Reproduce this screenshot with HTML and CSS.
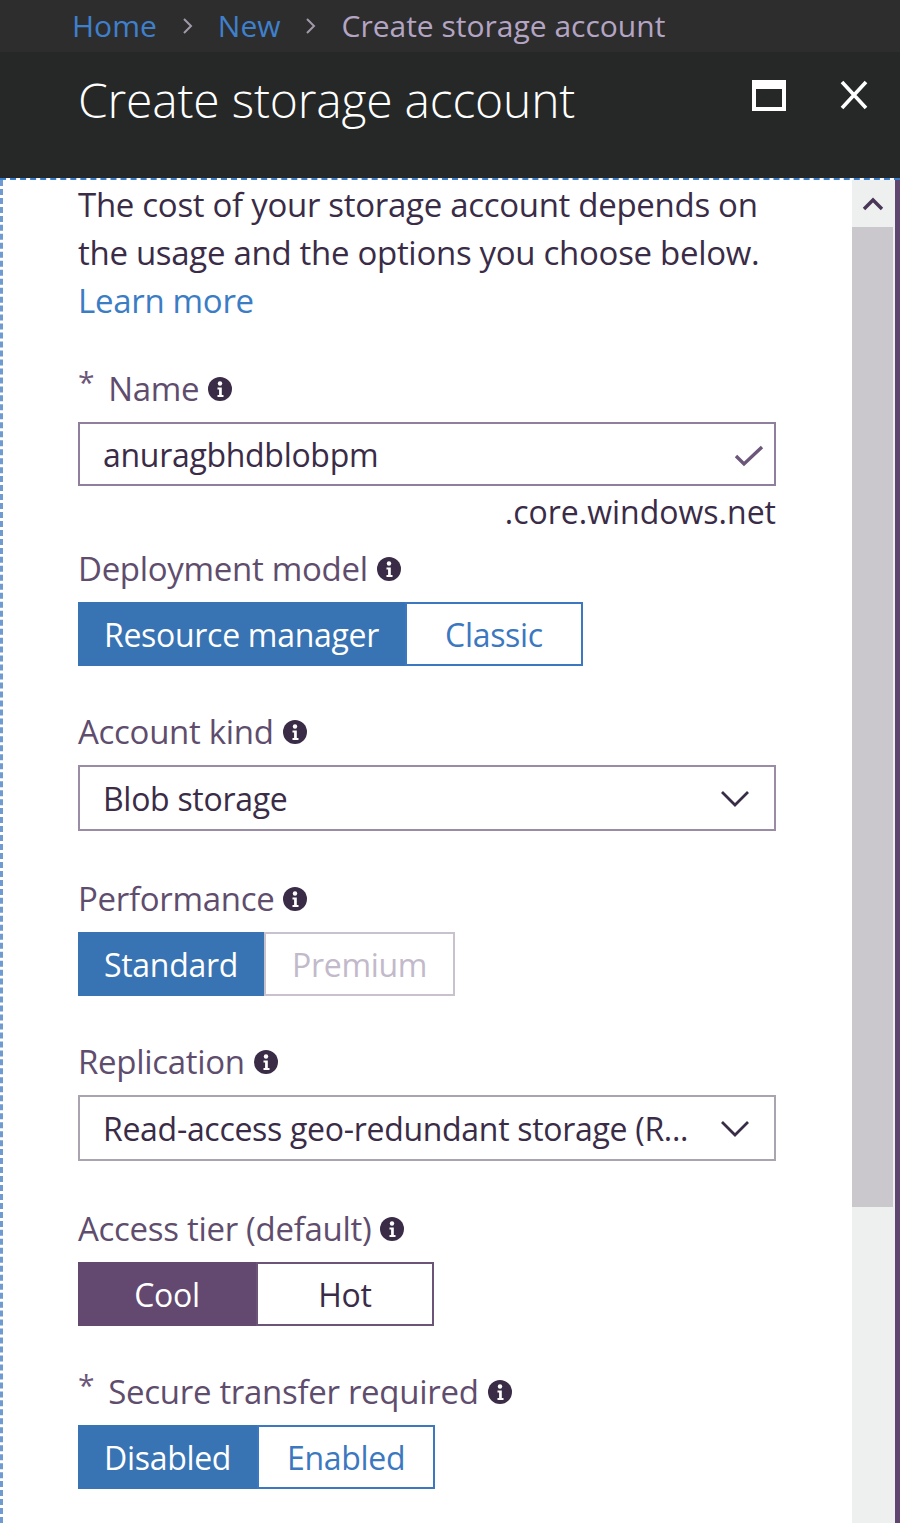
FILE: index.html
```html
<!DOCTYPE html>
<html lang="en">
<head>
<meta charset="utf-8">
<title>Create storage account</title>
<link rel="stylesheet" href="styles.css">
</head>
<body>
<nav class="breadcrumb">
  <a class="crumb crumb-link">Home</a>
  <svg class="crumb-sep" viewBox="0 0 11 18"><path d="M2 2 L9 9 L2 16"/></svg>
  <a class="crumb crumb-link">New</a>
  <svg class="crumb-sep" viewBox="0 0 11 18"><path d="M2 2 L9 9 L2 16"/></svg>
  <span class="crumb crumb-current">Create storage account</span>
</nav>
<header class="blade-header">
  <h1 class="blade-title">Create storage account</h1>
  <div class="blade-actions">
    <svg class="icon-max" viewBox="0 0 34 31"><rect x="2" y="2" width="30" height="27" fill="none" stroke="#fff" stroke-width="4"/><rect x="2" y="2" width="30" height="7" fill="#fff"/></svg>
    <svg class="icon-close" viewBox="0 0 28 30"><path d="M2 2 L26 28 M26 2 L2 28" stroke="#fff" stroke-width="3.6" fill="none"/></svg>
  </div>
</header>
<div class="blade-body">
  <main class="content">
    <p class="intro">
      <span class="intro-line">The cost of your storage account depends on</span>
      <span class="intro-line">the usage and the options you choose below.</span>
      <a class="link intro-line">Learn more</a>
    </p>

    <section class="field field-first">
      <div class="label"><span class="req">*</span>Name<svg class="info" viewBox="0 0 24 24"><circle cx="12" cy="12" r="12"/><circle cx="12" cy="6.5" r="2.2" fill="#fff"/><path d="M9.5 10.5 h4.3 v7.5 h1.7 v2 h-6 v-2 h1.6 v-5.5 h-1.6z" fill="#fff"/></svg></div>
      <div class="textbox">
        <span class="value">anuragbhdblobpm</span>
        <svg class="check" viewBox="0 0 30 22"><path d="M2 11 L10 19 L28 2" fill="none" stroke="#6c5679" stroke-width="3.4"/></svg>
      </div>
      <div class="suffix">.core.windows.net</div>
    </section>

    <section class="field field-after-suffix">
      <div class="label">Deployment model<svg class="info" viewBox="0 0 24 24"><circle cx="12" cy="12" r="12"/><circle cx="12" cy="6.5" r="2.2" fill="#fff"/><path d="M9.5 10.5 h4.3 v7.5 h1.7 v2 h-6 v-2 h1.6 v-5.5 h-1.6z" fill="#fff"/></svg></div>
      <div class="toggle toggle-blue">
        <span class="seg seg-on">Resource manager</span>
        <span class="seg seg-off">Classic</span>
      </div>
    </section>

    <section class="field">
      <div class="label">Account kind<svg class="info" viewBox="0 0 24 24"><circle cx="12" cy="12" r="12"/><circle cx="12" cy="6.5" r="2.2" fill="#fff"/><path d="M9.5 10.5 h4.3 v7.5 h1.7 v2 h-6 v-2 h1.6 v-5.5 h-1.6z" fill="#fff"/></svg></div>
      <div class="select">
        <span class="value">Blob storage</span>
        <svg class="chevron" viewBox="0 0 30 17"><path d="M2 2 L15 15 L28 2" fill="none" stroke="#3a2c47" stroke-width="2.8"/></svg>
      </div>
    </section>

    <section class="field field-after-select">
      <div class="label">Performance<svg class="info" viewBox="0 0 24 24"><circle cx="12" cy="12" r="12"/><circle cx="12" cy="6.5" r="2.2" fill="#fff"/><path d="M9.5 10.5 h4.3 v7.5 h1.7 v2 h-6 v-2 h1.6 v-5.5 h-1.6z" fill="#fff"/></svg></div>
      <div class="toggle toggle-blue">
        <span class="seg seg-on">Standard</span>
        <span class="seg seg-disabled">Premium</span>
      </div>
    </section>

    <section class="field">
      <div class="label">Replication<svg class="info" viewBox="0 0 24 24"><circle cx="12" cy="12" r="12"/><circle cx="12" cy="6.5" r="2.2" fill="#fff"/><path d="M9.5 10.5 h4.3 v7.5 h1.7 v2 h-6 v-2 h1.6 v-5.5 h-1.6z" fill="#fff"/></svg></div>
      <div class="select select-light">
        <span class="value">Read-access geo-redundant storage (R...</span>
        <svg class="chevron" viewBox="0 0 30 17"><path d="M2 2 L15 15 L28 2" fill="none" stroke="#3a2c47" stroke-width="2.8"/></svg>
      </div>
    </section>

    <section class="field field-after-select">
      <div class="label">Access tier (default)<svg class="info" viewBox="0 0 24 24"><circle cx="12" cy="12" r="12"/><circle cx="12" cy="6.5" r="2.2" fill="#fff"/><path d="M9.5 10.5 h4.3 v7.5 h1.7 v2 h-6 v-2 h1.6 v-5.5 h-1.6z" fill="#fff"/></svg></div>
      <div class="toggle toggle-purple">
        <span class="seg seg-on">Cool</span>
        <span class="seg seg-off">Hot</span>
      </div>
    </section>

    <section class="field">
      <div class="label"><span class="req">*</span>Secure transfer required<svg class="info" viewBox="0 0 24 24"><circle cx="12" cy="12" r="12"/><circle cx="12" cy="6.5" r="2.2" fill="#fff"/><path d="M9.5 10.5 h4.3 v7.5 h1.7 v2 h-6 v-2 h1.6 v-5.5 h-1.6z" fill="#fff"/></svg></div>
      <div class="toggle toggle-blue">
        <span class="seg seg-on">Disabled</span>
        <span class="seg seg-off">Enabled</span>
      </div>
    </section>
  </main>
  <aside class="scrollbar">
    <div class="scroll-up"><svg viewBox="0 0 22 14"><path d="M2 12 L11 3 L20 12" fill="none" stroke="#4a3658" stroke-width="3.4"/></svg></div>
    <div class="scroll-thumb"></div>
    <div class="scroll-track"></div>
  </aside>
</div>
</body>
</html>
```

FILE: styles.css
```css
* { box-sizing: border-box; }
html, body { margin: 0; padding: 0; }
body {
  width: 900px;
  height: 1523px;
  overflow: hidden;
  background: #ffffff;
  color: #3a2c47;
  font-family: "Open Sans", "Noto Sans", sans-serif;
}

/* breadcrumb */
.breadcrumb {
  height: 52px;
  background: #2d2d2e;
  display: flex;
  align-items: center;
  gap: 25px;
  padding-left: 72px;
  font-size: 30px;
  line-height: 1;
}
.crumb-link { color: #3f80cc; }
.crumb-current { color: #b5a5c4; }
.crumb-sep {
  width: 11px;
  height: 18px;
  fill: none;
  stroke: #a29aa8;
  stroke-width: 2;
}

/* blade header */
.blade-header {
  height: 126px;
  background: #262727;
  display: flex;
  align-items: flex-start;
  justify-content: space-between;
  padding: 18px 32px 0 78px;
}
.blade-title {
  margin: 0;
  font-size: 48px;
  line-height: 60px;
  font-weight: 300;
  letter-spacing: -0.2px;
  color: #ffffff;
}
.blade-actions {
  display: flex;
  align-items: flex-start;
  gap: 54px;
  padding-top: 10px;
}
.icon-max { width: 34px; height: 31px; display: block; }
.icon-close { width: 28px; height: 30px; display: block; }

/* body */
.blade-body {
  display: flex;
  height: 1345px;
  border-top: 2px dashed #3c7fc8;
}
.content {
  flex: 1;
  border-left: 3px dashed #6f9bd0;
  padding: 1px 76px 0 75px;
  font-size: 32px;
  letter-spacing: -0.3px;
}
.intro {
  margin: 0;
  display: flex;
  flex-direction: column;
  font-size: 33px;
  line-height: 48px;
  color: #3a2c47;
  white-space: nowrap;
}
.link { color: #3b7dc4; }

.field { margin-top: 44px; display: flex; flex-direction: column; }
.field-first { margin-top: 42px; }
.field-after-suffix { margin-top: 20px; }
.field-after-select { margin-top: 46px; }

.label {
  display: flex;
  align-items: center;
  height: 44px;
  margin-bottom: 11px;
  color: #5f4d6e;
  font-size: 33px;
  line-height: 44px;
}
.req {
  color: #6c5679;
  margin-right: 14px;
  font-size: 30px;
  align-self: flex-start;
  line-height: 30px;
}
.info {
  width: 24px;
  height: 24px;
  margin-left: 9px;
  fill: #3a2c47;
}

.textbox, .select {
  height: 64px;
  border: 2px solid #8f7f9c;
  display: flex;
  align-items: center;
  justify-content: space-between;
  padding: 0 10px 0 23px;
  color: #3a2c47;
}
.select { height: 66px; border-color: #9a8ca6; padding-right: 24px; }
.select-light { border-color: #aaa3b0; }
.check { width: 30px; height: 22px; margin-top: 4px; }
.chevron { width: 30px; height: 17px; flex-shrink: 0; }
.suffix {
  align-self: flex-end;
  line-height: 30px;
  margin-top: 11px;
  color: #3a2c47;
  font-size: 32px;
  letter-spacing: 0;
}

.toggle {
  display: flex;
  align-self: flex-start;
  height: 64px;
}
.seg {
  min-width: 178px;
  padding: 0 26px;
  display: flex;
  align-items: center;
  justify-content: center;
}
.toggle-blue .seg-on { background: #3873b3; color: #ffffff; }
.toggle-blue .seg-off { border: 2px solid #3b78bf; color: #3b78bf; }
.seg-disabled { border: 2px solid #c9c1cd; color: #c2b9ca; }
.toggle-purple .seg-on { background: #634870; color: #ffffff; }
.toggle-purple .seg-off { border: 2px solid #6b5478; color: #3a2c47; }

/* scrollbar */
.scrollbar {
  width: 48px;
  display: flex;
  flex-direction: column;
  background: #eef0f0;
  border-right: 5px solid #5e4671;
}
.scroll-up {
  height: 47px;
  display: flex;
  align-items: center;
  justify-content: center;
  padding-right: 2px;
}
.scroll-up svg { width: 22px; height: 14px; }
.scroll-thumb { height: 980px; background: #cac8cd; margin-right: 2px; }
.scroll-track { flex: 1; }
```
